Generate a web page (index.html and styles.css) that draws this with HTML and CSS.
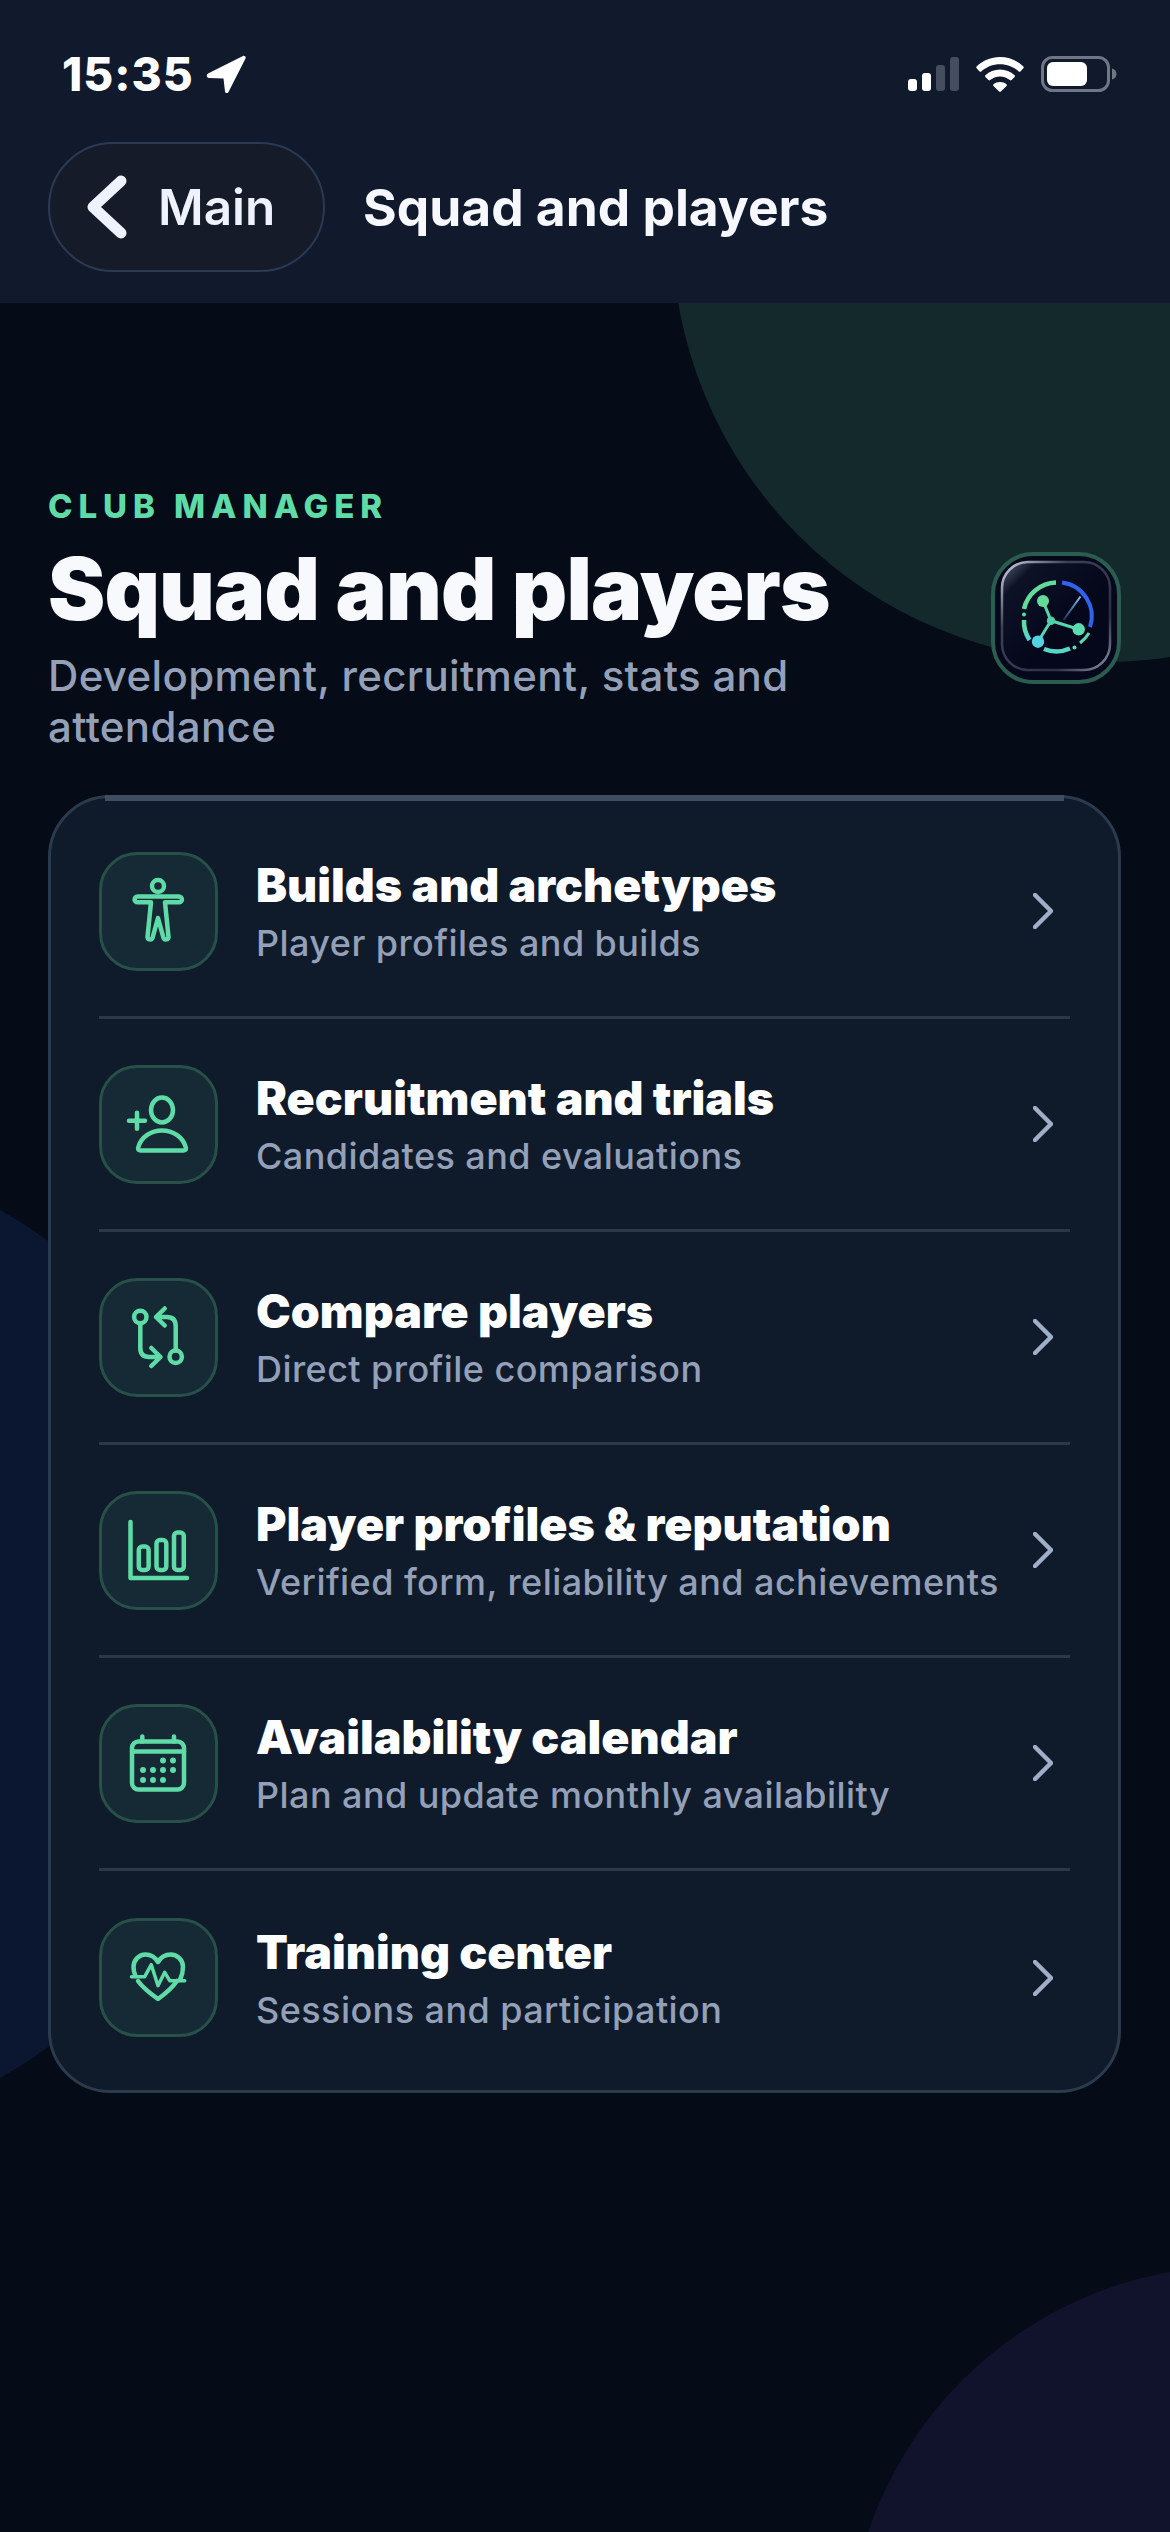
FILE: index.html
```html
<!DOCTYPE html>
<html lang="en">
<head>
  <meta charset="UTF-8">
  <title>Squad and players</title>
  <link rel="stylesheet" href="styles.css">
</head>
<body>
  <div class="backdrop">
    <div class="blob blob-green"></div>
    <div class="blob blob-blue"></div>
    <div class="blob blob-violet"></div>
  </div>

  <header class="topbar">
    <div class="status">
      <div class="clock">
        <span>15:35</span>
        <svg class="loc" viewBox="0 0 40 38"><path d="M37 1 2 18.500c-2 1.200-1.500 4.500 1 4.500L17.500 23.500l1.500 13c.2 2 2.800 2.300 3.500.5L39.500 3.500c.7-1.700-.8-3.200-2.500-2.500z" fill="#fff"/></svg>
      </div>
      <div class="status-icons">
        <svg class="signal" viewBox="0 0 51 34">
          <rect x="0" y="22" width="9" height="12" rx="3" fill="#fff"/>
          <rect x="14" y="16" width="9" height="18" rx="3" fill="#fff"/>
          <rect x="28" y="8" width="9" height="26" rx="3" fill="#444e5c"/>
          <rect x="42" y="0" width="9" height="34" rx="3" fill="#444e5c"/>
        </svg>
        <svg class="wifi" viewBox="0 0 48 35">
          <path d="M24 0C15 0 7 3.500 .6 9.500c-.5.500-.5 1.200 0 1.700l3 3.200c.5.500 1.200.5 1.700 0C10.300 9.800 16.900 7.200 24 7.200s13.700 2.600 18.700 7.200c.5.500 1.200.5 1.700 0l3-3.200c.5-.5.500-1.200 0-1.700C41 3.500 33 0 24 0z" fill="#fff"/>
          <path d="M24 12.500c-5.600 0-10.700 2.100-14.600 5.700-.5.500-.5 1.200 0 1.700l3 3.200c.5.500 1.200.5 1.700 0 2.600-2.300 6-3.700 9.900-3.700s7.300 1.400 9.900 3.700c.5.500 1.200.5 1.700 0l3-3.200c.5-.5.500-1.200 0-1.700-3.900-3.600-9-5.700-14.600-5.700z" fill="#fff"/>
          <path d="M24 25c-2.500 0-4.800.9-6.500 2.300-.5.500-.5 1.200 0 1.700l5.600 5.600c.5.500 1.300.5 1.800 0l5.600-5.600c.5-.5.500-1.200 0-1.700C28.800 25.900 26.500 25 24 25z" fill="#fff"/>
        </svg>
        <svg class="battery" viewBox="0 0 76 36">
          <rect x="1.500" y="1.500" width="66" height="33" rx="10" fill="none" stroke="#6f7786" stroke-width="3"/>
          <rect x="6" y="6" width="40" height="24" rx="6" fill="#fff"/>
          <path d="M71 12.500c2.800.8 4.500 3 4.500 5.500s-1.700 4.700-4.500 5.500z" fill="#6f7786"/>
        </svg>
      </div>
    </div>
    <nav class="nav">
      <a class="back">
        <svg viewBox="0 0 42 64"><path d="M34 6 6 32l28 26" fill="none" stroke="#edf2fc" stroke-width="11" stroke-linecap="round" stroke-linejoin="round"/></svg>
        <span>Main</span>
      </a>
      <div class="nav-title">Squad and players</div>
    </nav>
  </header>

  <main class="page">
    <section class="hero">
      <div class="hero-text">
        <div class="eyebrow">CLUB MANAGER</div>
        <h1>Squad and players</h1>
        <p>Development, recruitment, stats and attendance</p>
      </div>
      <svg class="logo" viewBox="0 0 130 132">
        <defs>
          <linearGradient id="bezel" x1="0" y1="0" x2="1" y2="1">
            <stop offset="0" stop-color="#d5d9e6"/>
            <stop offset=".3" stop-color="#3a4258"/>
            <stop offset=".75" stop-color="#2c3245"/>
            <stop offset="1" stop-color="#8d93a8"/>
          </linearGradient>
          <linearGradient id="sheen" x1="0" y1="0" x2=".6" y2=".6">
            <stop offset="0" stop-color="#5a6076"/>
            <stop offset=".28" stop-color="#0c1226"/>
            <stop offset="1" stop-color="#05071a"/>
          </linearGradient>
          <linearGradient id="arc" x1="0" y1="0" x2="1" y2="1">
            <stop offset="0" stop-color="#62dc9b"/>
            <stop offset="1" stop-color="#55d2e0"/>
          </linearGradient>
          <linearGradient id="needle" x1="0" y1="1" x2="1" y2="0">
            <stop offset="0" stop-color="#16305c"/>
            <stop offset="1" stop-color="#8fc0f2"/>
          </linearGradient>
        </defs>
        <rect x="2" y="2" width="126" height="128" rx="40" fill="#04081a" stroke="#2a5c4f" stroke-width="4"/>
        <rect x="11" y="10" width="108" height="108" rx="26" fill="url(#sheen)" stroke="url(#bezel)" stroke-width="2.500"/>
        <path d="M33 57A34 34 0 0 1 65 30.500" fill="none" stroke="#62dc9b" stroke-width="4.500"/>
        <path d="M71 30.500A34 34 0 0 1 99 75" fill="none" stroke="#2f62ee" stroke-width="4"/>
        <path d="M98 81A34 34 0 0 1 89 91" fill="none" stroke="#5adcb0" stroke-width="3"/>
        <path d="M79 96.500A34 34 0 0 1 53 97" fill="none" stroke="#58d6c8" stroke-width="4.500"/>
        <path d="M38.500 88A34 34 0 0 1 33 68" fill="none" stroke="url(#arc)" stroke-width="4.500"/>
        <circle cx="33" cy="62.500" r="2" fill="#5adcb0"/>
        <circle cx="83.500" cy="95.500" r="2" fill="#5adcb0"/>
        <path d="M72.500 68 89.500 44.500" stroke="url(#needle)" stroke-width="2" fill="none"/>
        <path d="M52 49 60 68.700 47 89.700M60 68.700 87.700 77.300" stroke="#55d8b0" stroke-width="3" fill="none"/>
        <circle cx="52" cy="49" r="6" fill="#62dc9b"/>
        <circle cx="87.700" cy="77.300" r="6.200" fill="#5adcb0"/>
        <circle cx="47" cy="89.700" r="6.200" fill="#55d2e0"/>
        <circle cx="60" cy="68.700" r="4.200" fill="#50cfa8"/>
      </svg>
    </section>

    <section class="card">
      <a class="row">
        <span class="tile">
          <svg viewBox="0 0 119 119">
            <circle cx="59" cy="34" r="6"/>
            <path d="M38.500 44.500H80a2.800 2.800 0 0 1 0 5.800H66L69.500 85a2.600 2.600 0 0 1-5 .8L59 66 53.500 85.800a2.600 2.600 0 0 1-5-.8L52 50.300H38.500a2.800 2.800 0 0 1 0-5.800z"/>
          </svg>
        </span>
        <span class="row-text">
          <b>Builds and archetypes</b>
          <small>Player profiles and builds</small>
        </span>
        <svg class="chev" viewBox="0 0 20 36"><path d="M2 2l16 16L2 34"/></svg>
      </a>
      <a class="row">
        <span class="tile">
          <svg viewBox="0 0 119 119">
            <ellipse cx="63" cy="45" rx="11" ry="12.500"/>
            <path d="M41.500 85.500C39 85.500 38.500 84 39.500 81.500 42.500 72 52 65.500 63 65.500S83.500 72 86.500 81.500C87.500 84 87 85.500 84.500 85.500z"/>
            <path d="M30 55.700H46M38 47.700V63.700"/>
          </svg>
        </span>
        <span class="row-text">
          <b>Recruitment and trials</b>
          <small>Candidates and evaluations</small>
        </span>
        <svg class="chev" viewBox="0 0 20 36"><path d="M2 2l16 16L2 34"/></svg>
      </a>
      <a class="row">
        <span class="tile">
          <svg viewBox="0 0 119 119">
            <circle cx="41.300" cy="39" r="6.200"/>
            <circle cx="76.700" cy="78.700" r="6.200"/>
            <path d="M41.300 45.200V70q0 9 9 9H61M52.300 70 61.500 79 52.300 88"/>
            <path d="M76.700 72.500V48q0-9-9-9H58M65.700 30.500 57 39 65.700 47.500"/>
          </svg>
        </span>
        <span class="row-text">
          <b>Compare players</b>
          <small>Direct profile comparison</small>
        </span>
        <svg class="chev" viewBox="0 0 20 36"><path d="M2 2l16 16L2 34"/></svg>
      </a>
      <a class="row">
        <span class="tile">
          <svg viewBox="0 0 119 119">
            <path d="M31.500 31V87H88"/>
            <rect x="39.800" y="55.500" width="9.800" height="23.500" rx="3.500"/>
            <rect x="57.500" y="49" width="9.800" height="30" rx="3.500"/>
            <rect x="75" y="41.500" width="9.800" height="37.500" rx="3.500"/>
          </svg>
        </span>
        <span class="row-text">
          <b>Player profiles &amp; reputation</b>
          <small>Verified form, reliability and achievements</small>
        </span>
        <svg class="chev" viewBox="0 0 20 36"><path d="M2 2l16 16L2 34"/></svg>
      </a>
      <a class="row">
        <span class="tile">
          <svg viewBox="0 0 119 119">
            <rect x="33" y="37.500" width="52" height="48" rx="6.500"/>
            <path d="M33 47.500H85M43.300 32.500V37.500M75 32.500V37.500"/>
            <g class="dots">
              <circle cx="64" cy="56.500" r="3"/><circle cx="74" cy="56.500" r="3"/>
              <circle cx="44" cy="66" r="3"/><circle cx="54" cy="66" r="3"/><circle cx="64" cy="66" r="3"/><circle cx="74" cy="66" r="3"/>
              <circle cx="44" cy="76" r="3"/><circle cx="54" cy="76" r="3"/><circle cx="64" cy="76" r="3"/>
            </g>
          </svg>
        </span>
        <span class="row-text">
          <b>Availability calendar</b>
          <small>Plan and update monthly availability</small>
        </span>
        <svg class="chev" viewBox="0 0 20 36"><path d="M2 2l16 16L2 34"/></svg>
      </a>
      <a class="row">
        <span class="tile">
          <svg viewBox="0 0 119 119">
            <path d="M36.500 58C35 55 34.500 52 34.500 49 34.500 42 40 36.500 46.500 36.500 51.500 36.500 56 39 59 44 62 39 66.500 36.500 71.500 36.500 78.500 36.500 84 42 84 49 84 53 83 57.500 81 62"/>
            <path d="M39 63C44 70 52 76 59 81 66 76 73 70 78 63"/>
            <path class="thin" d="M32.500 58.700H45.700L52.300 46.700 59 67.700 65.700 54.300 70.700 62.700H85.700"/>
          </svg>
        </span>
        <span class="row-text">
          <b>Training center</b>
          <small>Sessions and participation</small>
        </span>
        <svg class="chev" viewBox="0 0 20 36"><path d="M2 2l16 16L2 34"/></svg>
      </a>
    </section>
  </main>
</body>
</html>
```

FILE: styles.css
```css
* { box-sizing: border-box; }
html, body { margin: 0; height: 100%; }
body { position: relative; height: 2532px; overflow: hidden; background: #050b17; color: #fff; font-family: "Inter", "Liberation Sans", sans-serif; }

.backdrop { position: absolute; top: 0; left: 0; width: 1170px; height: 2532px; overflow: hidden; }
.blob { position: absolute; border-radius: 50%; }
.blob-green { left: 672px; top: -202px; width: 864px; height: 864px; background: #13292c; }
.blob-blue { left: -745px; top: 1145px; width: 998px; height: 998px; background: #0b1631; }
.blob-violet { left: 848px; top: 2266px; width: 780px; height: 780px; background: #11132c; }

.topbar { position: relative; height: 303px; background: #101a2c; padding: 54px 48px 0; }
.status { display: flex; justify-content: space-between; height: 40px; }
.clock { display: flex; align-items: center; gap: 12px; padding-left: 14px; font-size: 46px; font-weight: 800; letter-spacing: 1px; line-height: 40px; }
.loc { width: 40px; height: 38px; }
.status-icons { display: flex; align-items: center; padding-right: 5px; }
.signal { width: 51px; height: 34px; margin-right: 17px; }
.wifi { width: 48px; height: 35px; margin-right: 17px; }
.battery { width: 76px; height: 36px; }

.nav { display: flex; align-items: center; gap: 38px; margin-top: 48px; }
.back { display: flex; align-items: center; gap: 29px; width: 277px; height: 130px; padding-left: 37px; background: #151b28; border: 2px solid #2a3a55; border-radius: 65px; color: #edf2fc; font-size: 49.500px; font-weight: 600; }
.back svg { width: 42px; height: 64px; }
.nav-title { font-size: 51.500px; font-weight: 700; color: #f6f8fd; }

.page { position: relative; padding: 183px 49px 0 48px; }
.hero { display: flex; justify-content: space-between; height: 309px; padding-bottom: 45px; }
.hero-text { width: 880px; }
.eyebrow { font-size: 33px; line-height: 40px; font-weight: 800; letter-spacing: 0.18em; color: #5fdba7; }
.hero h1 { margin: 15px 0 0; font-size: 86px; line-height: 96px; font-weight: 900; letter-spacing: -0.01em; color: #f8f9fd; }
.hero p { margin: 13px 0 0; font-size: 42px; line-height: 51px; font-weight: 500; letter-spacing: 0.008em; color: #93a0b8; }
.logo { width: 130px; height: 132px; flex: none; align-self: center; }

.card { position: relative; height: 1298px; padding: 8px 48px 6px; background: #0f1a2b; border: 3px solid #2c3a4d; border-radius: 62px; }
.card::before { content: ""; position: absolute; top: -3px; left: 54px; right: 54px; height: 6px; background: #3e4d60; }
.row { display: flex; align-items: center; height: 213px; border-bottom: 3px solid #2c3748; }
.row:last-child { border-bottom: 0; }
.tile { flex: none; width: 119px; height: 119px; background: #162a36; border: 3px solid #275048; border-radius: 38px; }
.tile svg { display: block; width: 119px; height: 119px; margin: -3px; fill: none; stroke: #5fdba7; stroke-width: 4.500; stroke-linecap: round; stroke-linejoin: round; }
.tile .dots { fill: #5fdba7; stroke: none; }
.tile .thin { stroke-width: 3.500; }
.row-text { flex: 1; display: flex; flex-direction: column; margin: 6px 0 0 38px; }
.row-text b { font-size: 46.500px; line-height: 58px; font-weight: 900; color: #fff; }
.row-text small { font-size: 36px; line-height: 58px; font-weight: 500; letter-spacing: 0.012em; color: #93a0b8; }
.chev { flex: none; width: 20px; height: 36px; margin-right: 17px; fill: none; stroke: #a0aec8; stroke-width: 4.500; stroke-linecap: round; stroke-linejoin: round; }
```
